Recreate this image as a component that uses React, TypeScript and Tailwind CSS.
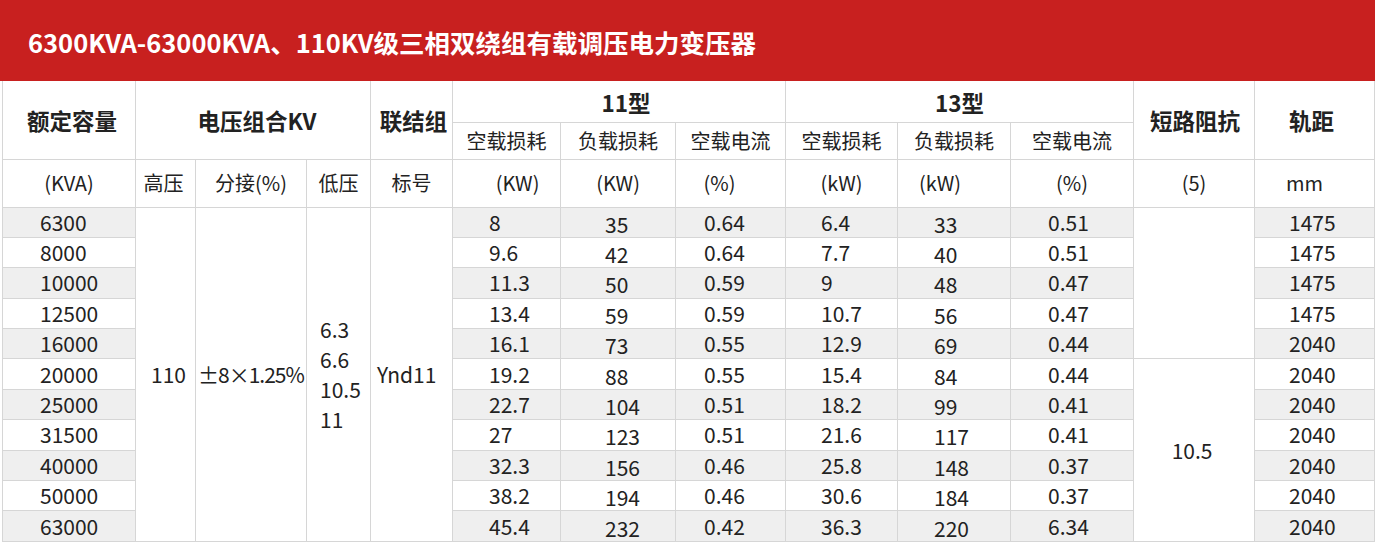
const rows = [
  ["6300", "8", "35", "0.64", "6.4", "33", "0.51", "1475"],
  ["8000", "9.6", "42", "0.64", "7.7", "40", "0.51", "1475"],
  ["10000", "11.3", "50", "0.59", "9", "48", "0.47", "1475"],
  ["12500", "13.4", "59", "0.59", "10.7", "56", "0.47", "1475"],
  ["16000", "16.1", "73", "0.55", "12.9", "69", "0.44", "2040"],
  ["20000", "19.2", "88", "0.55", "15.4", "84", "0.44", "2040"],
  ["25000", "22.7", "104", "0.51", "18.2", "99", "0.41", "2040"],
  ["31500", "27", "123", "0.51", "21.6", "117", "0.41", "2040"],
  ["40000", "32.3", "156", "0.46", "25.8", "148", "0.37", "2040"],
  ["50000", "38.2", "194", "0.46", "30.6", "184", "0.37", "2040"],
  ["63000", "45.4", "232", "0.42", "36.3", "220", "6.34", "2040"],
];

const widths = [133, 60, 111, 64, 82, 108, 115, 110, 112, 113, 123, 121, 120];

const cell = "border border-[#d6d6d6] p-0";
const head = `${cell} text-center font-bold text-[22.5px]`;
const sub = `${cell} text-center text-[20px] h-[37px] font-normal`;
const unit = `${cell} text-center text-[20px] h-[48px] font-normal`;

export default function App() {
  return (
    <div
      className="w-[1375px] bg-white text-[#222] leading-none"
      style={{ fontFamily: '"Noto Sans CJK SC", "Noto Sans", sans-serif' }}
    >
      <div className="h-[81px] bg-[#c8201f] flex items-center pl-[28px] pt-[3px]">
        <h1 className="text-white font-bold text-[25.5px]">
          6300KVA-63000KVA、110KV级三相双绕组有载调压电力变压器
        </h1>
      </div>

      <table className="table-fixed border-collapse ml-[2px] w-[1372px]">
        <colgroup>
          {widths.map((w, i) => (
            <col key={i} style={{ width: w }} />
          ))}
        </colgroup>
        <thead>
          <tr>
            <th rowSpan={2} className={`${head} border-t-0 pl-[6px]`}>额定容量</th>
            <th rowSpan={2} colSpan={3} className={`${head} border-t-0 pl-[8px]`}>
              电压组合KV
            </th>
            <th rowSpan={2} className={`${head} border-t-0 pl-[4px]`}>联结组</th>
            <th colSpan={3} className={`${head} border-t-0 h-[41px] text-[20px] pl-[14px] pt-[2px]`}>11型</th>
            <th colSpan={3} className={`${head} border-t-0 h-[41px] text-[20px] pt-[2px]`}>13型</th>
            <th rowSpan={2} className={`${head} border-t-0 pl-[2px]`}>短路阻抗</th>
            <th rowSpan={2} className={`${head} border-t-0 pr-[6px]`}>轨距</th>
          </tr>
          <tr>
            <th className={sub}>空载损耗</th>
            <th className={sub}>负载损耗</th>
            <th className={sub}>空载电流</th>
            <th className={sub}>空载损耗</th>
            <th className={sub}>负载损耗</th>
            <th className={sub}>空载电流</th>
          </tr>
          <tr>
            <th className={unit}>(KVA)</th>
            <th className={`${unit} pr-[4px]`}>高压</th>
            <th className={unit}>分接(%)</th>
            <th className={unit}>低压</th>
            <th className={unit}>标号</th>
            <th className={`${unit} pl-[22px]`}>(KW)</th>
            <th className={unit}>(KW)</th>
            <th className={`${unit} pr-[22px]`}>(%)</th>
            <th className={unit}>(kW)</th>
            <th className={`${unit} pr-[28px]`}>(kW)</th>
            <th className={unit}>(%)</th>
            <th className={unit}>(5)</th>
            <th className={`${unit} pr-[20px]`}>mm</th>
          </tr>
        </thead>
        <tbody className="text-[21px]">
          {rows.map((r, i) => {
            const bg = i % 2 === 0 ? "bg-[#efefef]" : "bg-white";
            return (
              <tr key={r[0]} className="h-[30.4px]">
                <td className={`${cell} ${bg} text-left pl-[37px]`}>{r[0]}</td>
                {i === 0 && (
                  <>
                    <td rowSpan={11} className={`${cell} bg-white text-left pl-[15px]`}>110</td>
                    <td rowSpan={11} className={`${cell} bg-white text-left pl-[2px] tracking-[-1px]`}>
                      ±8×1.25%
                    </td>
                    <td rowSpan={11} className={`${cell} bg-white text-left pl-[13px] leading-[30px]`}>
                      6.3
                      <br />
                      6.6
                      <br />
                      10.5
                      <br />
                      11
                    </td>
                    <td rowSpan={11} className={`${cell} bg-white text-left pl-[6px]`}>Ynd11</td>
                  </>
                )}
                <td className={`${cell} ${bg} text-left pl-[36px]`}>{r[1]}</td>
                <td className={`${cell} ${bg} text-left pl-[44px] pt-[4px]`}>{r[2]}</td>
                <td className={`${cell} ${bg} text-left pl-[28px]`}>{r[3]}</td>
                <td className={`${cell} ${bg} text-left pl-[35px]`}>{r[4]}</td>
                <td className={`${cell} ${bg} text-left pl-[36px] pt-[4px]`}>{r[5]}</td>
                <td className={`${cell} ${bg} text-left pl-[37px]`}>{r[6]}</td>
                {i === 0 && <td rowSpan={5} className={`${cell} bg-white`} />}
                {i === 5 && (
                  <td rowSpan={6} className={`${cell} bg-white text-center pr-[4px]`}>10.5</td>
                )}
                <td className={`${cell} ${bg} text-left pl-[34px]`}>{r[7]}</td>
              </tr>
            );
          })}
        </tbody>
      </table>
    </div>
  );
}
